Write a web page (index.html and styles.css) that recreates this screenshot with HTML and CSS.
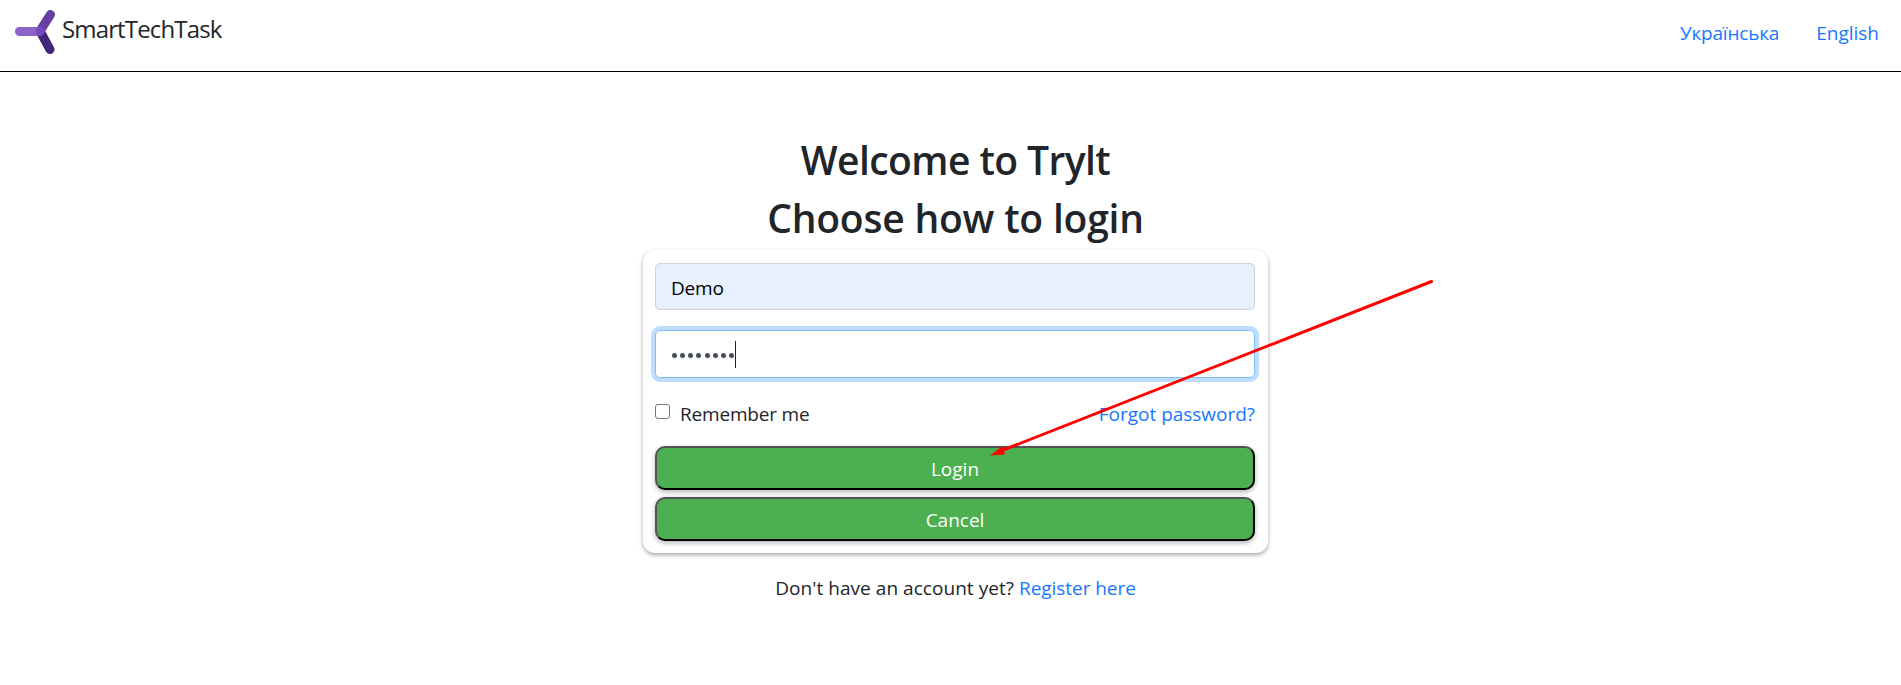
FILE: index.html
```
<!DOCTYPE html>
<html lang="en">
<head>
<meta charset="utf-8">
<title>SmartTechTask</title>
<link rel="stylesheet" href="styles.css">
</head>
<body>
<header class="navbar">
  <a class="brand" href="#">
    <svg class="brand-logo" width="42" height="46" viewBox="0 0 42 46" fill="none" stroke-width="9" stroke-linecap="round">
      <path d="M26 22 36 40.500" stroke="#43267c"/>
      <path d="M26 22 36.500 5.500" stroke="#673ea3"/>
      <path d="M5.500 22.500H26" stroke="#8a63cb"/>
      <circle cx="26" cy="22.500" r="4.500" fill="#764abc"/>
    </svg>
    <span class="brand-name">SmartTechTask</span>
  </a>
  <nav class="languages"><a class="link lang-uk" href="#">Українська</a><a class="link lang-en" href="#">English</a></nav>
</header>
<main class="page">
  <h1 class="title title-welcome">Welcome to Trylt</h1>
  <h1 class="title title-choose">Choose how to login</h1>
  <form class="card">
    <div class="field">Demo</div>
    <div class="field field-focus"><span class="dots"><i></i><i></i><i></i><i></i><i></i><i></i><i></i><i></i></span><span class="caret"></span></div>
    <div class="options">
      <label class="remember"><span class="checkbox"></span>Remember me</label>
      <a class="link forgot" href="#">Forgot password?</a>
    </div>
    <button class="button" type="button">Login</button>
    <button class="button" type="button">Cancel</button>
  </form>
  <p class="register">Don't have an account yet? <a class="link register-link" href="#">Register here</a></p>
</main>
<svg class="arrow" width="460" height="190" viewBox="980 270 460 190">
  <path d="M1431.500 281.500 1002 450.500" stroke="#f00" stroke-width="3" stroke-linecap="round"/>
  <path d="M990 455.500 1002.500 446 1005 454.500Z" fill="#f00"/>
</svg>
</body>
</html>
```
FILE: styles.css
```
* { box-sizing: border-box; }
body {
  margin: 0;
  min-height: 685px;
  background: #fff;
  color: #212529;
  font: 19px/30px "Open Sans", "Noto Sans", sans-serif;
  letter-spacing: -0.18px;
}
.link { color: #1677ff; text-decoration: none; }
.navbar {
  display: flex;
  justify-content: space-between;
  height: 72px;
  border-bottom: 1px solid #000;
}
.brand { display: flex; padding: 9px 0 0 14px; color: #212529; text-decoration: none; }
.brand-logo { flex: none; margin-right: 6px; }
.brand-name { font-size: 24px; line-height: 40px; letter-spacing: -0.85px; }
.languages { display: flex; gap: 37px; padding: 18px 22px 0 0; }
.lang-uk { letter-spacing: -0.2px; }
.lang-en { letter-spacing: 0; }
.page { display: flex; flex-direction: column; align-items: center; padding: 64px 0 0 10px; }
.title { margin: 0 0 10px; font-size: 39px; line-height: 48px; font-weight: 600; white-space: nowrap; }
.title-welcome { letter-spacing: -0.57px; }
.title-choose { margin-bottom: 8px; letter-spacing: -0.2px; }
.card {
  width: 625px;
  height: 303px;
  padding: 13px 13px 12px 12px;
  border-radius: 12px;
  box-shadow: 0 2px 4px rgba(0, 0, 0, .35);
}
.field {
  display: flex;
  align-items: center;
  height: 47px;
  padding: 2px 16px 0 15px;
  border: 1px solid #ced4da;
  border-radius: 5px;
  background: #e8f0fe;
  color: #000;
}
.field-focus {
  height: 48px;
  margin-top: 20px;
  padding-top: 0;
  border-color: #80bdff;
  background: #fff;
  box-shadow: 0 0 0 4px #bfdeff;
}
.dots { display: flex; gap: 3.140px; padding: 2px 1px 0; }
.dots i { width: 5px; height: 5px; border-radius: 50%; background: #495057; }
.caret { width: 1px; height: 27px; background: #212529; }
.options { display: flex; justify-content: space-between; height: 68px; padding-top: 21px; }
.remember { display: flex; }
.checkbox { width: 15px; height: 15px; margin: 5px 10px 0 0; border: 1px solid #767676; border-radius: 3px; }
.forgot { letter-spacing: -0.02px; }
.button {
  display: block;
  width: 100%;
  height: 44px;
  margin: 0 0 7px;
  padding: 2px 0 0;
  border: 2px outset #000;
  border-radius: 10px;
  background: #4caf50;
  box-shadow: 0 2px 5px rgba(0, 0, 0, .3);
  color: #fff;
  font: inherit;
  letter-spacing: 0;
}
.register { margin: 20px 0 0; letter-spacing: 0.05px; }
.register-link { letter-spacing: -0.05px; }
.arrow { position: absolute; left: 980px; top: 270px; }
```
